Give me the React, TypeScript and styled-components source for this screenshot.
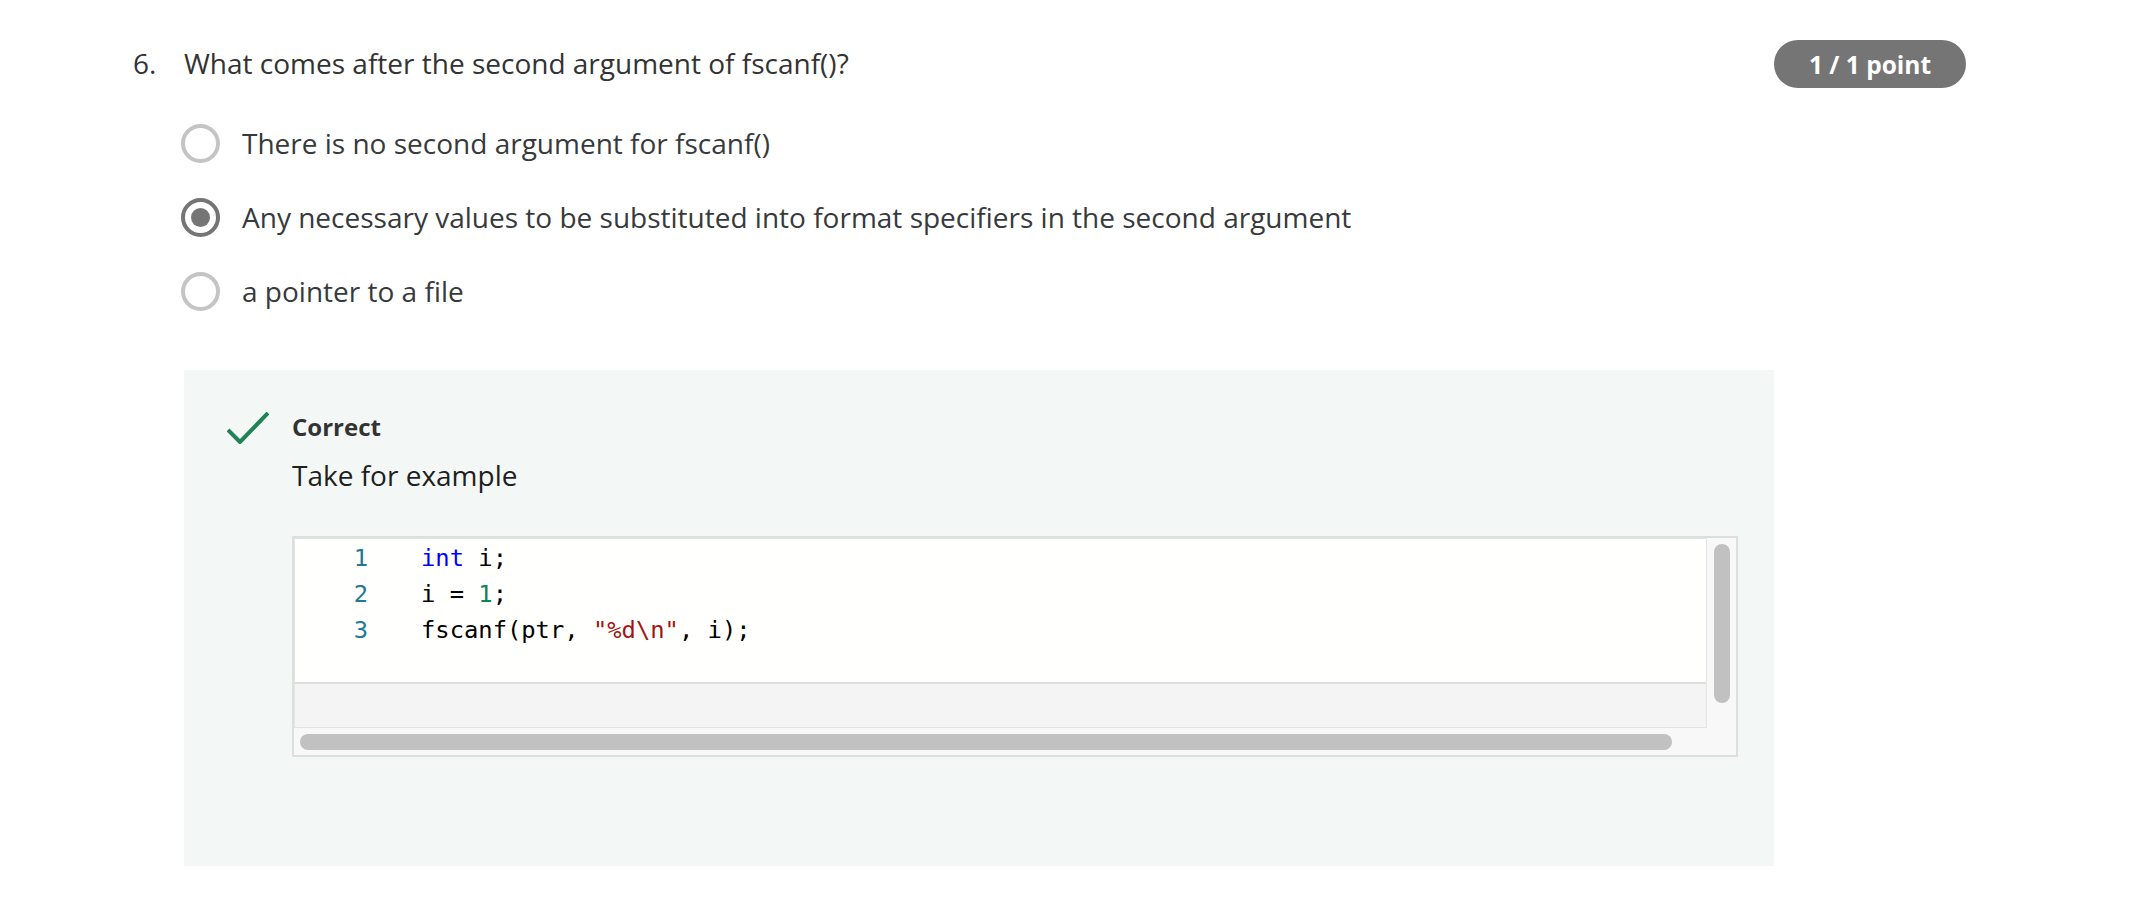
import React from "react";
import styled, { createGlobalStyle } from "styled-components";

const Global = createGlobalStyle`
  html, body { margin: 0; padding: 0; background: #ffffff; }
  body { font-family: "Open Sans", "Noto Sans", sans-serif; }
`;

const Page = styled.div`
  display: flex;
  align-items: flex-start;
  padding: 40px 0 0 133px;
`;

const Num = styled.div`
  width: 51px;
  flex: none;
  font-size: 28px;
  line-height: 46px;
  color: #333333;
`;

const Main = styled.div`
  width: 1590px;
  flex: none;
`;

const Question = styled.div`
  font-size: 28px;
  line-height: 46px;
  color: #333333;
`;

const Badge = styled.div`
  width: 192px;
  height: 48px;
  flex: none;
  border-radius: 24px;
  background: #757575;
  color: #ffffff;
  font-weight: 700;
  font-size: 24.5px;
  display: flex;
  align-items: center;
  justify-content: center;
`;

const Options = styled.div`
  display: flex;
  flex-direction: column;
  margin-top: 20px;
`;

const Option = styled.label`
  height: 74px;
  display: flex;
  align-items: center;
  gap: 22px;
  margin-left: -3px;
`;

const Radio = styled.span<{ $checked?: boolean }>`
  width: 39px;
  height: 39px;
  box-sizing: border-box;
  border-radius: 50%;
  border: 4px solid ${(p) => (p.$checked ? "#757575" : "#c4c4c4")};
  background: #ffffff;
  flex: none;
  display: flex;
  align-items: center;
  justify-content: center;
  &::after {
    content: "";
    display: ${(p) => (p.$checked ? "block" : "none")};
    width: 19px;
    height: 19px;
    border-radius: 50%;
    background: #757575;
  }
`;

const OptionText = styled.span`
  font-size: 28px;
  color: #373a3c;
`;

const Feedback = styled.div`
  margin-top: 42px;
  background: #f3f8f6;
  padding: 42px 36px 109px 43px;
  display: flex;
  align-items: flex-start;
  gap: 23px;
`;

const CheckIcon = styled.svg`
  flex: none;
  width: 42px;
  height: 32px;
`;

const FeedbackBody = styled.div`
  flex: 1;
  min-width: 0;
`;

const Verdict = styled.div`
  font-size: 24px;
  font-weight: 700;
  line-height: 30px;
  color: #333333;
`;

const Explanation = styled.div`
  margin-top: 13px;
  font-size: 28px;
  line-height: 40px;
  color: #1f1f1f;
`;

const Editor = styled.div`
  margin-top: 41px;
  border: 2px solid #dedede;
  background: #f8f8f8;
  display: grid;
  grid-template-columns: 1fr 29px;
  grid-template-rows: 190px 27px;
`;

const Viewport = styled.div`
  border: 1px solid #e4e4e4;
  display: flex;
  flex-direction: column;
`;

const CodeArea = styled.div`
  height: 145px;
  background: #fffffe;
  border-bottom: 2px solid #dedede;
  font-family: "DejaVu Sans Mono", "Liberation Mono", monospace;
  font-size: 23.8px;
  line-height: 36px;
  padding-top: 1px;
  box-sizing: border-box;
`;

const Line = styled.div`
  display: flex;
  white-space: pre;
`;

const LineNo = styled.span`
  width: 73px;
  text-align: right;
  color: #237893;
  flex: none;
`;

const Code = styled.span`
  margin-left: 53px;
  color: #000000;
`;

const Tok = styled.span<{ $kind: "kw" | "num" | "str" }>`
  color: ${(p) => (p.$kind === "kw" ? "#0000ff" : p.$kind === "num" ? "#098658" : "#a31515")};
`;

const Panel = styled.div`
  flex: 1;
  background: #f4f4f4;
`;

const VTrack = styled.div`
  padding: 6px 0 0 7px;
`;

const VThumb = styled.div`
  width: 16px;
  height: 159px;
  border-radius: 8px;
  background: #c1c1c1;
`;

const HTrack = styled.div`
  padding: 6px 0 0 6px;
`;

const HThumb = styled.div`
  width: 1372px;
  height: 16px;
  border-radius: 8px;
  background: #c1c1c1;
`;

const options = [
  { text: "There is no second argument for fscanf()", checked: false },
  { text: "Any necessary values to be substituted into format specifiers in the second argument", checked: true },
  { text: "a pointer to a file", checked: false },
];

export default function App() {
  return (
    <>
      <Global />
      <Page>
        <Num>6.</Num>
        <Main>
          <Question>What comes after the second argument of fscanf()?</Question>
          <Options>
            {options.map((o) => (
              <Option key={o.text}>
                <Radio $checked={o.checked} />
                <OptionText>{o.text}</OptionText>
              </Option>
            ))}
          </Options>
          <Feedback>
            <CheckIcon viewBox="0 0 42 32">
              <polyline points="1,18 13,30 41,1" fill="none" stroke="#1f8354" strokeWidth="4" />
            </CheckIcon>
            <FeedbackBody>
              <Verdict>Correct</Verdict>
              <Explanation>Take for example</Explanation>
              <Editor>
                <Viewport>
                  <CodeArea>
                    <Line>
                      <LineNo>1</LineNo>
                      <Code>
                        <Tok $kind="kw">int</Tok> i;
                      </Code>
                    </Line>
                    <Line>
                      <LineNo>2</LineNo>
                      <Code>
                        i = <Tok $kind="num">1</Tok>;
                      </Code>
                    </Line>
                    <Line>
                      <LineNo>3</LineNo>
                      <Code>
                        fscanf(ptr, <Tok $kind="str">"%d\n"</Tok>, i);
                      </Code>
                    </Line>
                  </CodeArea>
                  <Panel />
                </Viewport>
                <VTrack>
                  <VThumb />
                </VTrack>
                <HTrack>
                  <HThumb />
                </HTrack>
              </Editor>
            </FeedbackBody>
          </Feedback>
        </Main>
        <Badge>1 / 1 point</Badge>
      </Page>
    </>
  );
}
